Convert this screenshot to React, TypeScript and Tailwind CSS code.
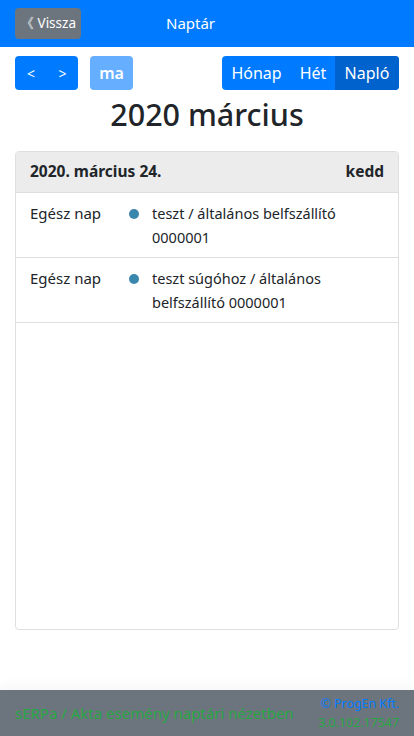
import * as React from "react";

const events = [
    { time: "Egész nap", title: "teszt / általános belfszállító 0000001" },
    { time: "Egész nap", title: "teszt súgóhoz / általános belfszállító 0000001" },
];

export default function App() {
    return (
        <div className="flex h-[736px] flex-col bg-white text-[#212529]" style={{ fontFamily: '"Noto Sans", "Open Sans", sans-serif' }}>
            {/* Header */}
            <div className="flex h-[47px] items-center bg-[#007bff] px-[15px]">
                <button className="flex h-[31px] w-[66px] items-center justify-center rounded-[4px] bg-[#6c757d] text-[13.5px] text-white">
                    《 Vissza
                </button>
                <div className="ml-[85px] text-[15px] text-white">Naptár</div>
            </div>

            {/* Content */}
            <div className="flex flex-1 flex-col px-[15px] pb-[60px] pt-[9px]">
                <div className="flex h-[34px] items-center justify-between">
                    <div className="flex h-full items-center gap-[12px]">
                        <div className="flex h-full overflow-hidden rounded-[4px] bg-[#007bff] text-[14px] text-white">
                            <button className="w-[32px]">&lt;</button>
                            <button className="w-[31px]">&gt;</button>
                        </div>
                        <button className="h-full w-[43px] rounded-[4px] bg-[#66aeff] text-[16px] font-semibold text-white">ma</button>
                    </div>
                    <div className="flex h-full overflow-hidden rounded-[4px] bg-[#007bff] text-[16px] text-white">
                        <button className="w-[69px]">Hónap</button>
                        <button className="w-[44px]">Hét</button>
                        <button className="w-[64px] bg-[#0062cc]">Napló</button>
                    </div>
                </div>

                <h2 className="mt-[2px] text-center text-[30.5px] font-medium leading-[44px]">2020 március</h2>

                <div className="mt-[15px] flex flex-1 flex-col overflow-hidden rounded-[4px] border border-[#dfdfdf]">
                    <div className="flex h-[41px] items-center justify-between border-b border-[#dfdfdf] bg-[#ececec] px-[14px] text-[15.5px] font-bold">
                        <span>2020. március 24.</span>
                        <span>kedd</span>
                    </div>
                    {events.map((e, i) => (
                        <div key={i} className="flex border-b border-[#dfdfdf] py-[8px] leading-[24px]">
                            <div className="w-[100px] shrink-0 pl-[14px] text-[15px]">{e.time}</div>
                            <div className="flex w-[36px] shrink-0 justify-center pt-[8px]">
                                <span className="h-[10px] w-[10px] rounded-full bg-[#3a87ad]" />
                            </div>
                            <div className="pr-[14px] text-[14.5px]">{e.title}</div>
                        </div>
                    ))}
                </div>
            </div>

            {/* Footer */}
            <div className="flex h-[46px] items-center justify-between bg-[#6c757d] px-[15px] shadow-[0_-6px_10px_rgba(0,0,0,0.03)]">
                <span className="text-[15px] text-[#28a745]">sERPa / Akta esemény naptári nézetben</span>
                <div className="flex flex-col items-end text-[12.4px] leading-[19px]">
                    <span className="text-[#007bff]">© ProgEn Kft.</span>
                    <span className="text-[#28a745]">3.0.102.17547</span>
                </div>
            </div>
        </div>
    );
}
